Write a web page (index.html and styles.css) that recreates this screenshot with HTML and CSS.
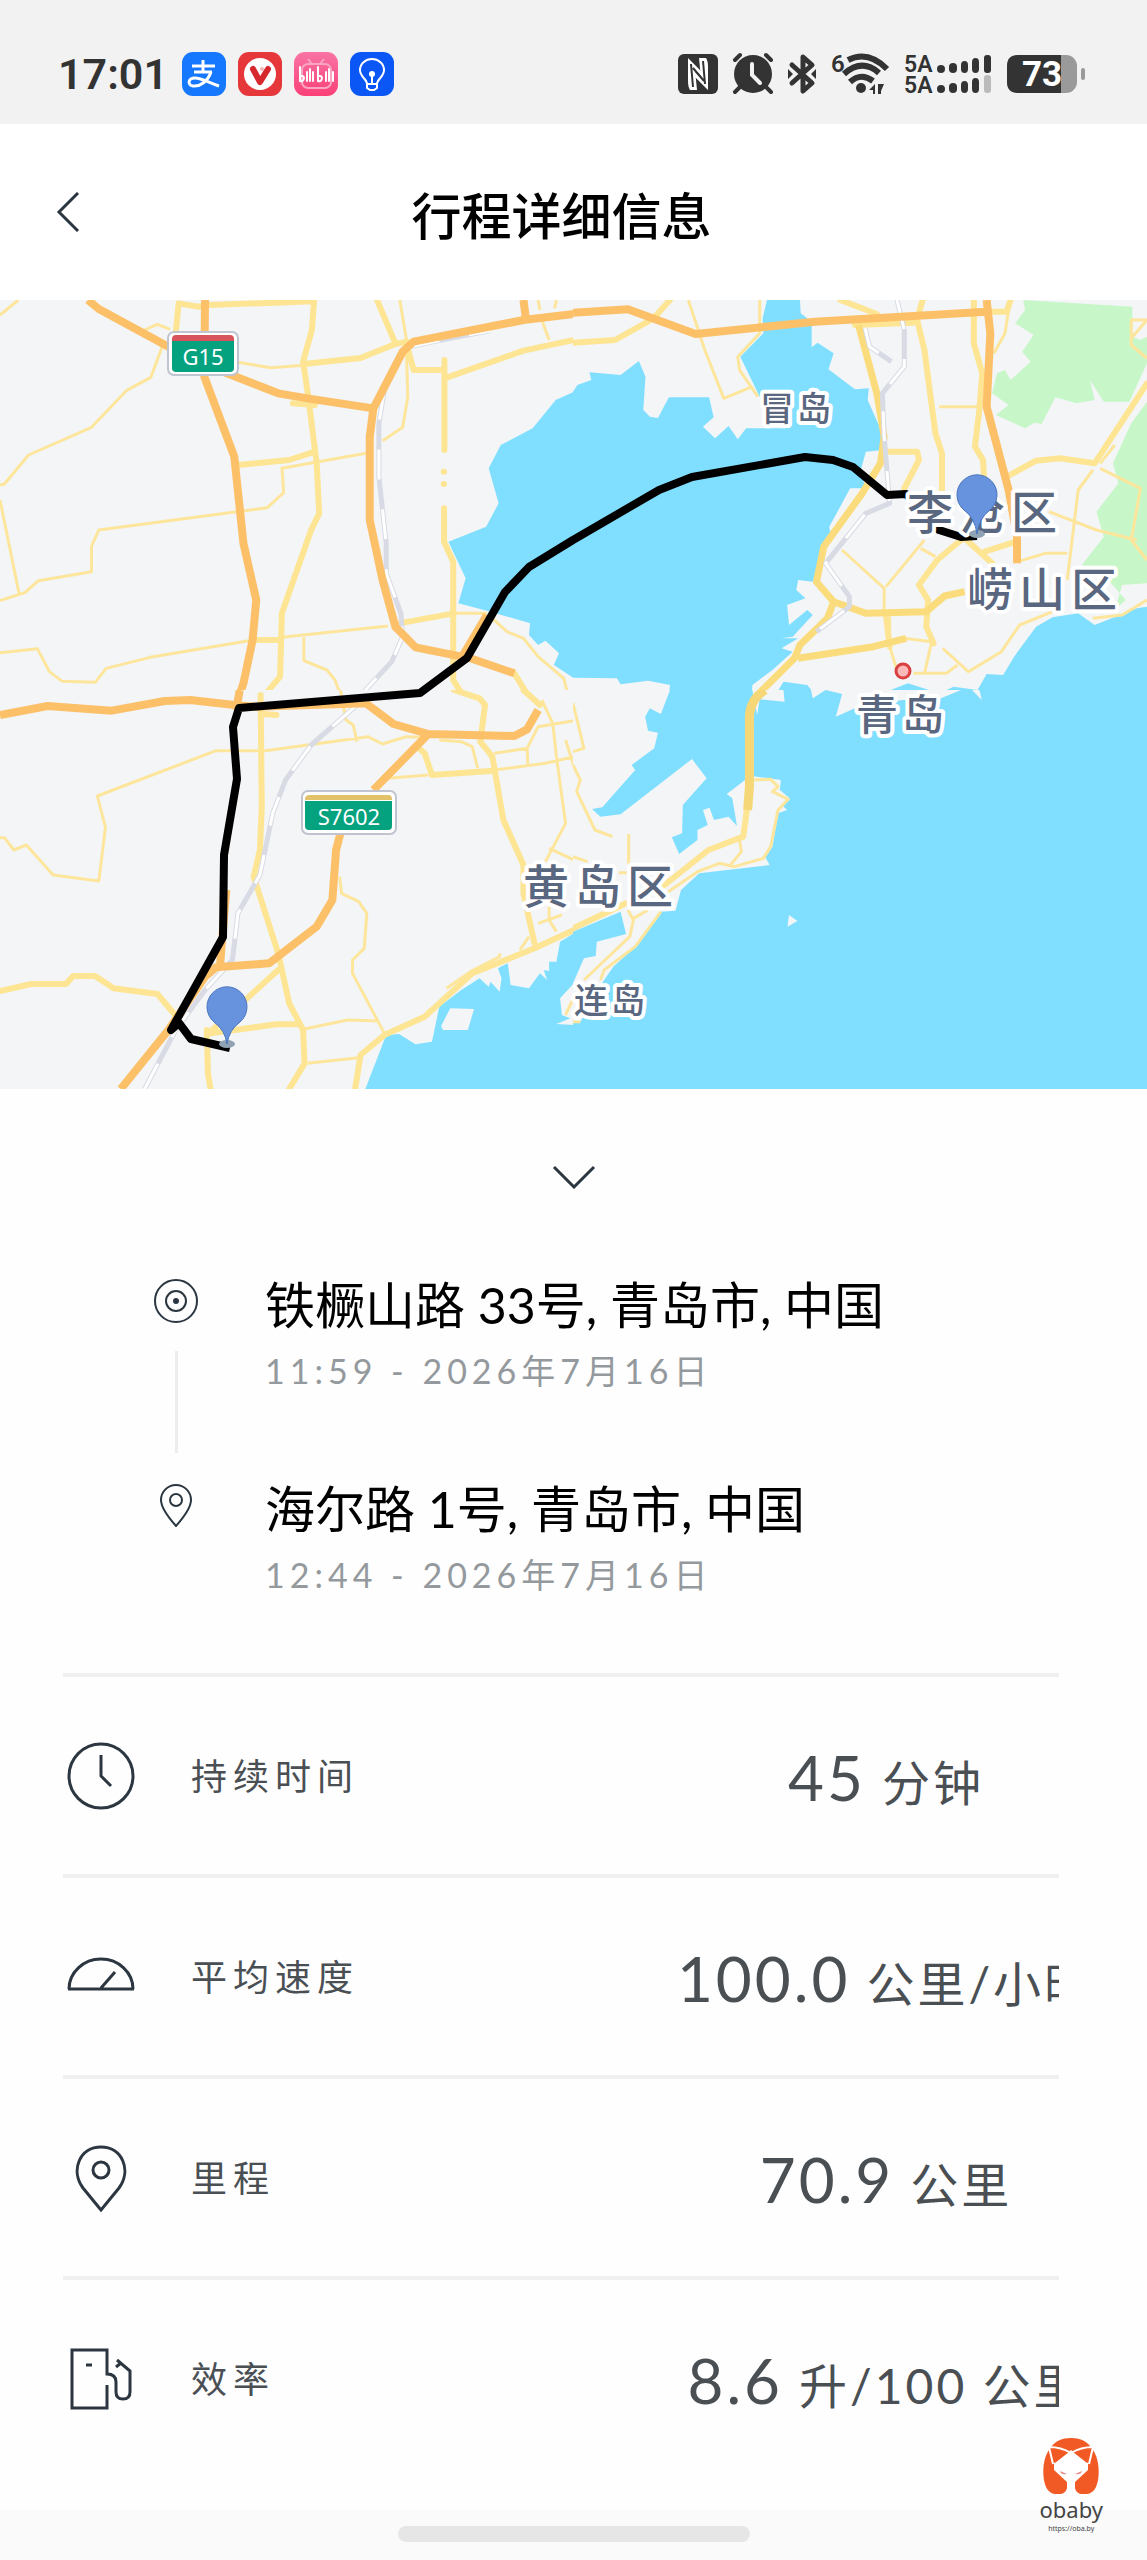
FILE: index.html
```html
<!DOCTYPE html>
<html lang="zh-CN">
    <head>
        <meta charset="utf-8">
        <meta name="viewport" content="width=device-width, initial-scale=1">
        <title>行程详细信息</title>
        <link rel="stylesheet" href="styles.css">
    </head>
    <body>
        <div class="status-bar">
            <div class="status-left">
                <span class="time">17:01</span>
                <svg class="app" viewBox="0 0 44 44">
                    <rect width="44" height="44" rx="11" fill="#1677ff"/>
                    <g fill="none" stroke="#fff" stroke-width="3">
                        <path d="M10 14h23M21 8v11M12 20h18"/>
                        <path d="M29 20c-3 9-11 15-18 14c-6-1-5-8 2-8c7 0 14 5 24 8"/>
                    </g>
                </svg>
                <svg class="app" viewBox="0 0 44 44">
                    <rect width="44" height="44" rx="11" fill="#e6373b"/>
                    <circle cx="22" cy="22" r="16" fill="#fff"/>
                    <path d="M15 17l7 13l8-13" fill="none" stroke="#d6282d" stroke-width="6" stroke-linecap="round" stroke-linejoin="round"/>
                    <circle cx="24" cy="17" r="2" fill="#f3b6b8"/>
                </svg>
                <svg class="app" viewBox="0 0 44 44">
                    <defs>
                        <linearGradient id="pink" x2="0" y2="1">
                            <stop stop-color="#f874a4"/>
                            <stop offset="1" stop-color="#fb4077"/>
                        </linearGradient>
                    </defs>
                    <rect width="44" height="44" rx="11" fill="url(#pink)"/>
                    <path d="M14 7l4 5M30 7l-4 5" stroke="#fba5c3" stroke-width="2"/>
                    <rect x="8" y="12" width="29" height="24" rx="6" fill="none" stroke="#fba5c3" stroke-width="2"/>
                    <g fill="none" stroke="#fff" stroke-width="2" stroke-linecap="round">
                        <path d="M6 15v14c4 2 6-6 1-5M24 15v14c4 2 6-6 1-5"/>
                        <path d="M13 20v9M16 17v12M19 20v9M32 20v9M35 17v12M39 20v9"/>
                    </g>
                </svg>
                <svg class="app" viewBox="0 0 44 44">
                    <rect width="44" height="44" rx="11" fill="#0b57f5"/>
                    <g fill="none" stroke="#fff" stroke-width="2">
                        <path d="M17 32c0-5-7-7-7-14a12 11 0 0 1 24 0c0 7-7 9-7 14z"/>
                        <path d="M17 32v4l3 2h4l3-2v-4M22 22v9"/>
                    </g>
                    <circle cx="22" cy="22" r="3" fill="#fff"/>
                </svg>
            </div>
            <div class="status-right">
                <svg width="40" height="40" viewBox="0 0 40 40">
                    <rect width="40" height="40" rx="6" fill="#333"/>
                    <path d="M10 4l15 15v5l-8-8l2 20h-7q-2-3-2-9z" fill="#fff"/>
                    <path d="M30 36L15 21v-5l8 8l-2-20h7q2 3 2 9z" fill="#fff"/>
                    <path d="M13 10l2 23M27 30l-2-23M15 14l11 13" stroke="#333" stroke-width="2"/>
                </svg>
                <svg width="40" height="40" viewBox="0 0 40 40">
                    <circle cx="20" cy="20" r="19" fill="#333"/>
                    <path d="M2 6l5-5M38 6l-5-5M7 33l-5 5M33 33l5 5" stroke="#333" stroke-width="4" stroke-linecap="round"/>
                    <path d="M19 10v11l8 8" fill="none" stroke="#f2f2f2" stroke-width="4" stroke-linecap="round"/>
                </svg>
                <svg width="28" height="40" viewBox="0 0 28 40">
                    <path d="M4 11l20 18l-9 8V3l9 8L4 29" fill="none" stroke="#333" stroke-width="5" stroke-linecap="round" stroke-linejoin="round"/>
                    <path d="M0 15l5 5l-5 5zM28 15l-5 5l5 5z" fill="#333"/>
                </svg>
                <svg width="58" height="42" viewBox="0 0 58 42">
                    <text class="status-text" x="0" y="19" font-size="24">6</text>
                    <g fill="none" stroke="#333" stroke-width="6">
                        <path d="M17 7Q37-3 56 16"/>
                        <path d="M13 21Q31 5 48 20"/>
                        <path d="M19 29Q30 19 42 28"/>
                    </g>
                    <circle cx="30" cy="35" r="5" fill="#333"/>
                    <path d="M44 31v10h-2v-4h-4zM47 31h6l-3 7v3h-3z" fill="#333"/>
                </svg>
                <svg width="88" height="40" viewBox="0 0 88 40">
                    <text class="status-text" x="0" y="18" font-size="23">5A</text>
                    <text class="status-text" x="0" y="39" font-size="23">5A</text>
                    <g fill="#333">
                        <rect x="33" y="11" width="8" height="8" rx="4"/>
                        <rect x="45" y="9" width="8" height="10" rx="4"/>
                        <rect x="57" y="7" width="7" height="12" rx="4"/>
                        <rect x="68" y="4" width="7" height="15" rx="4"/>
                        <rect x="80" y="1" width="7" height="18" rx="3"/>
                        <rect x="33" y="31" width="8" height="8" rx="4"/>
                        <rect x="45" y="29" width="8" height="10" rx="4"/>
                        <rect x="57" y="27" width="7" height="12" rx="4"/>
                        <rect x="68" y="24" width="7" height="15" rx="4"/>
                    </g>
                    <rect x="80" y="21" width="7" height="18" rx="3" fill="#bbb"/>
                </svg>
                <svg width="79" height="38" viewBox="0 0 79 38">
                    <rect width="70" height="38" rx="11" fill="#9a9a9a"/>
                    <path d="M11 0h43v38H11Q0 38 0 27V11Q0 0 11 0z" fill="#333"/>
                    <rect x="74" y="13" width="4" height="12" rx="2" fill="#9a9a9a"/>
                    <text class="battery-text" x="15" y="31">73</text>
                </svg>
            </div>
        </div>

        <header class="header">
            <button class="back" aria-label="返回">
                <svg width="24" height="40" viewBox="0 0 24 40"><path d="M22 1L3 20l19 19"/></svg>
            </button>
            <h1 class="title">行程详细信息</h1>
        </header>

        <svg class="map" viewBox="0 0 1147 789" role="img" aria-label="行程地图">
            <!-- north west -->
            <svg x="0" y="-10" width="574" height="410" viewBox="0 0 1568 1230" preserveAspectRatio="none">
                <path class="water" d="M1568 305L1518 330L1455 415L1368 465L1335 535L1362 640L1328 710L1225 755L1272 865L1252 940L1330 962L1448 1000L1445 1035L1470 1065L1490 1052L1527 1090L1513 1125L1568 1165z"/>
                <path class="street" d="M0 75L50 30M443 170L412 262L345 302L250 412L78 495L12 582L0 585M0 630L52 910M0 932L68 908L105 872L250 845V768L270 720L730 653L775 608L770 530M770 535L1000 490M1045 452L1100 412L1114 320L1110 180M1092 30L1112 160M0 1088L102 1076L135 1145L170 1174L260 1177L290 1135L410 1102L680 1052M770 1042L1060 1008M830 1042V1112L893 1140L915 1170L935 1230M650 217L740 233L830 226M1480 90L1500 150M1470 30L1475 60M1520 30L1515 55M1240 970H1330M1345 985L1385 1025L1430 1045L1470 1100L1540 1165L1555 1230M395 120L430 103L465 118"/>
                <path class="avenue" d="M480 130L488 40L540 50L570 45L858 34M858 30L852 120L828 215L842 320L865 520L872 670L850 720L770 970L765 1160L712 1230M830 222L985 204L1080 162L1112 155M1030 30L1080 160M1115 180L1130 240H1213M1214 210V480M1214 265L1430 182L1568 150M650 525L790 510L860 485M1213 655V755L1238 815V1170L1258 1205L1310 1230M1090 1000L1240 970M700 1050H765M800 340L860 345M1405 1150L1450 1230M1212 545h1M1212 582h1"/>
                <path class="rail" d="M1120 170L1185 155L1340 122M1050 300L1035 400V560L1055 760V850L1095 970L1100 1040L1070 1115L990 1210L975 1230"/>
                <path class="rail-dash" d="M1120 170L1185 155L1340 122M1050 300L1035 400V560L1055 760V850L1095 970L1100 1040L1070 1115L990 1210L975 1230"/>
                <path class="highway" d="M240 30L270 57L460 170L620 250L760 310L840 325L1020 355M560 30L558 260L640 500L665 760L700 930L690 1050L665 1180L650 1230M1568 72L1430 90L1130 155L1100 185L1020 355L1010 440V690L1045 870L1080 1010L1135 1072L1285 1105L1405 1150M1430 30L1437 90M1265 1095L1330 975"/>
                <path class="highway" d="M420 1230L470 1226H540L570 1230"/>
            </svg>
            <!-- south west -->
            <svg x="0" y="390" width="574" height="410" viewBox="0 0 1568 1230" preserveAspectRatio="none">
                <rect class="land" width="1568" height="1230"/>
                <path class="water" d="M998 1197L1055 1035L1090 1032L1135 1063L1180 1055L1200 950L1260 900L1310 865L1335 890L1340 875L1365 905L1370 865L1360 835L1387 820L1395 885L1445 895L1475 850L1495 870L1485 840L1500 843V815L1520 815L1530 755L1568 730V880L1530 925L1535 975L1558 985L1520 1002L1568 1005V1230H990z"/>
                <path class="land" d="M1230 955L1295 957L1278 1020H1210L1205 1008z"/>
                <path class="street" d="M0 443H12L38 480L72 465L145 555L270 573L288 412L266 318L590 182H725L1005 140L1045 162L1110 140L1155 142M930 0L945 90L965 105L975 155M1200 150L1260 155L1290 170L1305 235M1060 265L1170 255M1350 240L1490 220L1568 200M1350 190L1440 175L1470 110L1568 92M1440 175L1442 225M1480 30L1510 100L1520 200L1545 400L1490 515M1545 150L1568 230M1500 475L1568 510M928 560L933 610L980 635L1002 670L995 775L963 810V850L1050 1030M828 1018L950 990L1035 993M840 1120L980 1103M1470 700L1535 675M1500 650V690L1520 725M1420 780L1445 740"/>
                <path class="street" d="M1545 975L1568 920M1220 895L1285 845L1365 800V790"/>
                <path class="avenue" d="M712 15L715 350L710 480L693 560L760 790L790 940L828 1020L832 1120L790 1197M755 75L720 72M1140 170L1160 190L1180 255L1350 242M1240 0L1310 25L1325 45L1312 155L1345 200L1375 390L1430 525V610L1460 760M1430 0L1475 45M0 903L85 882H180L200 858H260L310 895L430 912L490 990M570 1030L760 840M575 1030L755 1003H810M565 1020L568 1150L575 1197M970 1197L985 1095L1050 1035L1160 980L1290 850L1460 775L1568 720"/>
                <path class="rail" d="M970 50L850 165L780 270L745 370L710 555L650 670L635 810L560 900L480 1020L395 1197"/>
                <path class="rail-dash" d="M970 50L850 165L780 270L745 370L710 555L650 670L635 810L560 900L480 1020L395 1197"/>
                <path class="highway" d="M0 75L130 48L305 62L450 33L520 30L640 45L700 50L1000 40L1075 102L1170 132L1405 138L1440 118L1470 60M655 0L645 60M1170 132L1020 300M930 430L918 480L908 630L865 710L735 820L590 832L560 860L460 1020L330 1197M618 600L600 840"/>
            </svg>
            <!-- north east -->
            <svg x="573" y="-10" width="574" height="410" viewBox="0 0 1568 1230" preserveAspectRatio="none">
                <rect class="land" width="1568" height="1230"/>
                <path class="park" d="M1230 30L1235 60L1208 100L1258 135L1227 185L1250 215L1195 270L1180 240L1158 250L1145 310L1190 345L1155 375L1235 415L1260 398L1280 402L1318 322L1375 340L1425 330L1412 270L1450 335L1520 335L1568 220V140L1550 150L1528 140V50zM1568 335L1525 400L1475 520L1490 580L1430 665L1450 740L1390 825L1470 880L1510 930L1480 960L1500 885L1568 880z"/>
                <path class="water" d="M0 305L12 285L50 270L45 247L130 255L180 213L198 260L192 360L210 380L232 384L262 322L372 322L384 382L355 410L388 445L425 408L450 448L473 415L580 415L510 320L457 200L520 130L518 85L530 30H620L622 70L652 95V172L668 158L712 190L698 238L770 298L808 295L805 330L845 430V480L800 485L785 545L800 595L757 595L735 640L700 710L705 745L685 770L655 875L615 870L610 900L635 925L585 945L590 1005L640 960L655 975L600 1040L570 1045L615 1045L570 1075L600 1085L545 1140L490 1185L487 1230H260L265 1185L205 1172L130 1183L120 1165L0 1163z"/>
                <path class="water" d="M1568 950L1540 955L1425 1005L1380 970L1310 982L1265 1010L1205 1100L1175 1155L1130 1152L1105 1200L1040 1190L1000 1210L915 1180L845 1210L850 1230H1568zM575 1175L640 1185L655 1205L700 1200L730 1230H545z"/>
                <path class="street" d="M315 30L360 180L412 325L490 290M510 30V130L450 200L455 240L505 320M1000 350H1110M1190 60L1180 130L1150 190M1525 145L1568 90H1525V165L1568 205M1420 540L1380 600L1350 870M1440 535L1550 595L1525 750L1568 810M1300 665L1430 720L1540 750M735 780L850 895V980M960 750L855 890M950 775L990 800M1215 815L1290 790H1350M1480 465L1440 520M905 1045L980 1055L960 1150M865 980V1070L885 1140M930 1150H1020L1050 1125M1010 1075L1080 1145L1170 1085L1220 1005L1310 965M1420 985L1500 975L1568 930"/>
                <path class="avenue" d="M265 30L220 85L115 150L0 158M730 30L830 72M955 30L940 90L960 180L990 430L1008 490V620M1095 30V160L1118 250L1110 360L1098 470L1120 510L1125 600M1130 65H1185L1195 30M860 485H940L945 510L905 595M1060 750L995 810L945 885L970 930L965 1010L985 1060M855 975L865 1070M1075 750L1145 820M1125 785L1210 755M1185 560L1265 512L1330 505L1425 520L1568 280M770 105L930 98"/>
                <path class="coast-road" d="M780 105L830 310L850 440L840 520L790 610L685 770L665 875L712 935L800 970L965 965L1015 918L1070 905M712 935L695 985L620 1065L605 1105L490 1230M615 1105L820 1070L910 1045"/>
                <path class="rail" d="M885 30L905 120V230L845 310L850 440L865 640L800 670L690 820L755 920V950L665 1025M798 115L810 170L870 215"/>
                <path class="rail-dash" d="M885 30L905 120V230L845 310L850 440L865 640L800 670L690 820L755 920V950L665 1025M798 115L810 170L870 215"/>
                <path class="highway" d="M0 68L150 58L335 132L660 95L1130 65M1130 30L1140 130L1130 350L1190 600L1213 740V820"/>
            </svg>
            <!-- south east -->
            <svg x="573" y="390" width="574" height="410" viewBox="0 0 1568 1230" preserveAspectRatio="none">
                <rect class="water" width="1568" height="1230"/>
                <path class="land" d="M0 0H265L240 72L210 55L197 80L205 122L232 128L222 175L160 225L170 240L80 352L52 357L75 380L130 373L325 207L365 265L300 345L298 430L270 442L290 492L340 450V420L368 405L355 360L373 353L385 390L425 380L448 408L435 325L420 312L470 270V255L568 270L565 300L592 325L570 345L585 360L560 370L545 470L525 500L537 525L345 550L295 600L280 662L240 665L170 770L110 830L85 870L20 995L0 1000V880L30 805L62 798L65 755L145 732L130 665L0 725z"/>
                <path class="land" d="M490 0H575L578 35L510 28L503 75L495 30zM650 0L655 25L690 0L735 12L718 80L770 55L900 30L1005 25L1060 0H1110L1117 30L1090 0zM590 675L613 693L586 710z"/>
                <path class="street" d="M0 185L30 175L0 40M0 225L20 270L10 305L60 420L108 440M152 432V525M0 500L40 515M125 548H150M495 270L540 268L560 290L545 305L588 328L560 360L540 470L520 505L440 530L400 520L340 545L260 605M455 450L460 485L430 525M150 660L165 690L155 740L30 870M240 665L170 770L85 840L75 870M165 685L205 660M0 995H20"/>
                <path class="avenue" d="M475 360L465 440L370 480L250 585M145 640L0 715"/>
                <path class="coast-road wide" d="M525 0Q480 30 482 90V290L477 360"/>
            </svg>

            <path class="route" d="M230 748L191 739L179 723L171 730L223 637L224 555L237 479L233 427L239 408L420 393L467 358L505 292L529 267L573 240L659 190L692 177L805 157L833 160L853 167L887 195L906 194L939 230L961 237L977 236"/>

            <circle cx="903" cy="371" r="7" class="city-dot"/>

            <g class="sign">
                <rect x="168" y="32" width="70" height="43" rx="6"/>
                <path fill="#d9535c" d="M176 35h54q4 0 4 4v2h-62v-2q0-4 4-4z"/>
                <path fill="#04a27f" d="M172 41h62v27q0 4-4 4h-54q-4 0-4-4z"/>
                <text x="203" y="65">G15</text>
            </g>
            <g class="sign">
                <rect x="302" y="491" width="94" height="43" rx="6"/>
                <path fill="#e2c268" d="M310 495h78q4 0 4 4v1h-87v-1q0-4 5-4z"/>
                <path fill="#04a27f" d="M305 501h87v25q0 4-4 4h-79q-4 0-4-4z"/>
                <text x="349" y="525">S7602</text>
            </g>

            <g class="place">
                <text class="district" x="907" y="229">李沧区</text>
                <text class="district" x="967" y="306">崂山区</text>
                <text class="district" x="523" y="603">黄岛区</text>
                <text class="city" x="856" y="430">青岛</text>
                <text class="island" x="760" y="121">冒岛</text>
                <text class="island" x="574" y="713">连岛</text>
            </g>

            <g class="pin">
                <ellipse cx="977" cy="234" rx="8" ry="4"/>
                <path d="M977 234Q975 218 964 210A20 20 0 1 1 990 210Q979 218 977 234z"/>
                <ellipse cx="227" cy="744" rx="8" ry="4"/>
                <path d="M227 744Q225 730 214 722A20 20 0 1 1 240 722Q229 730 227 744z"/>
            </g>
        </svg>

        <main class="details">
            <button class="collapse" aria-label="收起">
                <svg width="44" height="24" viewBox="0 0 44 24"><path d="M2 2l20 20L42 2"/></svg>
            </button>

            <ol class="stops">
                <li class="stop">
                    <div class="marker">
                        <svg width="44" height="44" viewBox="0 0 44 44">
                            <circle cx="22" cy="22" r="21"/>
                            <circle cx="22" cy="22" r="10"/>
                            <circle cx="22" cy="22" r="2" fill="#2b3640"/>
                        </svg>
                        <span class="connector"></span>
                    </div>
                    <div>
                        <p class="address">铁橛山路 33号, 青岛市, 中国</p>
                        <p class="date">11:59 - 2026年7月16日</p>
                    </div>
                </li>
                <li class="stop">
                    <div class="marker">
                        <svg width="44" height="44" viewBox="0 0 44 44">
                            <path d="M22 43Q7 26 7 17a15 15 0 0 1 30 0Q37 26 22 43z"/>
                            <circle cx="22" cy="17" r="6"/>
                        </svg>
                    </div>
                    <div>
                        <p class="address">海尔路 1号, 青岛市, 中国</p>
                        <p class="date">12:44 - 2026年7月16日</p>
                    </div>
                </li>
            </ol>

            <dl class="stats">
                <div class="stat">
                    <svg width="68" height="68" viewBox="0 0 68 68">
                        <circle cx="34" cy="34" r="32"/>
                        <path d="M34 13v21l10 10"/>
                    </svg>
                    <dt>持续时间</dt>
                    <dd><span class="number">45</span> 分钟</dd>
                </div>
                <div class="stat">
                    <svg width="68" height="68" viewBox="0 0 68 68">
                        <path d="M1 46h66M2 46a32 30 0 0 1 64 0M34 45l14-16"/>
                    </svg>
                    <dt>平均速度</dt>
                    <dd><span class="number">100.0</span> 公里/小时</dd>
                </div>
                <div class="stat">
                    <svg width="68" height="68" viewBox="0 0 68 68">
                        <path d="M34 66L16 44C3 26 13 3 34 3s31 23 18 41z"/>
                        <circle cx="34" cy="26" r="8"/>
                    </svg>
                    <dt>里程</dt>
                    <dd><span class="number">70.9</span> 公里</dd>
                </div>
                <div class="stat">
                    <svg width="68" height="68" viewBox="0 0 68 68">
                        <path d="M40 40v23H5V5h35v24q9 0 9 8v10q0 7 7 7t7-7V26L50 15M49 22l5-4M19 20h6"/>
                    </svg>
                    <dt>效率</dt>
                    <dd><span class="number">8.6</span> 升/100 公里</dd>
                </div>
            </dl>
        </main>

        <footer class="nav-bar">
            <span class="nav-handle"></span>
        </footer>

        <div class="watermark">
            <svg width="56" height="56" viewBox="0 0 56 56">
                <path fill="#f15a24" d="M28 0C17 0 11 4 6 12C-1 22-1 40 3 49C6 56 13 57 18 56C24 54 25 50 24 42H32C31 50 32 54 38 56C43 57 50 56 53 49C57 40 57 22 50 12C45 4 39 0 28 0z"/>
                <path fill="#fff" d="M28 12L45 25V32L32 44V56H24V44L11 32V25z"/>
                <path fill="#f15a24" d="M5 8l21 6l-14 11zM51 8l-21 6l14 11z"/>
                <path fill="none" stroke="#fff" stroke-width="2" d="M10 26L6 9Q18 9 28 15Q38 9 50 9L46 26"/>
                <path fill="#e78a8a" d="M17 33l7 3q-6 1-7-3zM39 33l-7 3q6 1 7-3z"/>
            </svg>
            <span class="brand">obaby</span>
            <span class="brand-url">https://oba.by</span>
        </div>
    </body>
</html>
```
FILE: styles.css
```css
* {
    box-sizing: border-box;
    margin: 0;
    padding: 0;
}

body {
    position: relative;
    display: flex;
    flex-direction: column;
    min-height: 100vh;
    background-color: #fefefe;
    font-family: Lato, "Noto Sans CJK SC", sans-serif;
}

button {
    border: 0;
    background: none;
    cursor: pointer;
}

svg {
    flex-shrink: 0;
}

.status-bar {
    display: flex;
    align-items: center;
    justify-content: space-between;
    height: 124px;
    padding: 24px 61px 0 58px;
    background-color: #f2f2f2;
}

.status-left {
    display: flex;
    align-items: center;
    gap: 12px;
}

.status-right {
    display: flex;
    align-items: center;
    gap: 15px;
}

.status-right svg {
    overflow: visible;
}

.time {
    margin-right: 2px;
    color: #333;
    font-family: Roboto, sans-serif;
    font-size: 43px;
    font-weight: 600;
    line-height: 48px;
}

.app {
    width: 44px;
    height: 44px;
}

.status-text {
    fill: #333;
    font-family: Roboto, sans-serif;
    font-weight: 600;
}

.battery-text {
    fill: #fff;
    font-family: Roboto, sans-serif;
    font-size: 35px;
    font-weight: 700;
}

/* header */
.header {
    display: grid;
    grid-template-columns: 120px 1fr 144px;
    align-items: center;
    height: 176px;
    background-color: #fff;
}

.back {
    display: flex;
    padding: 20px 0 20px 56px;
}

.back path,
.collapse path {
    fill: none;
    stroke: #2b3640;
    stroke-width: 3;
}

.title {
    padding-top: 8px;
    text-align: center;
    font-size: 50px;
    font-weight: 500;
    line-height: 72px;
}

/* map */
.map {
    display: block;
    width: 100%;
    height: auto;
    background-color: #f3f5f7;
}

.map path {
    vector-effect: non-scaling-stroke;
    stroke-linejoin: round;
}

.land {
    fill: #f3f5f7;
}

.water {
    fill: #80dfff;
}

.park {
    fill: #c7f7c8;
}

.street,
.avenue,
.coast-road,
.highway,
.rail,
.rail-dash,
.route {
    fill: none;
}

.street {
    stroke: #fde69c;
    stroke-width: 3;
}

.avenue {
    stroke: #fde594;
    stroke-width: 6;
    stroke-linecap: round;
}

.coast-road {
    stroke: #fbdc7c;
    stroke-width: 7;
}

.wide {
    stroke: #f5d778;
    stroke-width: 9;
}

.highway {
    stroke: #fcc069;
    stroke-width: 8;
}

.rail {
    stroke: #d8dae4;
    stroke-width: 5;
}

.rail-dash {
    stroke: #fff;
    stroke-width: 3;
    stroke-dasharray: 30 30;
}

.route {
    stroke: #000;
    stroke-width: 8;
}

.city-dot {
    fill: #fbb9b9;
    stroke: #d9403f;
    stroke-width: 3;
}

.sign rect {
    fill: #fff;
    stroke: #bfc4d0;
    stroke-width: 2;
}

.sign text {
    fill: #fff;
    font-family: "Noto Sans", sans-serif;
    font-size: 22px;
    text-anchor: middle;
}

.place {
    fill: #5a6780;
    stroke: #fff;
    stroke-width: 8;
    stroke-linejoin: round;
    paint-order: stroke;
    font-family: "Noto Sans CJK SC", sans-serif;
    font-weight: 500;
}

.district {
    font-size: 46px;
    letter-spacing: 6px;
}

.city {
    font-size: 42px;
    letter-spacing: 4px;
}

.island {
    font-size: 34px;
    letter-spacing: 3px;
}

.pin path {
    fill: #6792dd;
    stroke: #4a74bd;
    stroke-width: 1;
}

.pin ellipse {
    fill: #8fa3b5;
}

/* trip details */
.details {
    display: flex;
    flex-direction: column;
}

.collapse {
    display: flex;
    align-items: center;
    justify-content: center;
    height: 176px;
}

.stops {
    padding-top: 4px;
    padding-left: 141px;
    list-style: none;
}

.stop {
    display: grid;
    grid-template-columns: 70px 1fr;
    column-gap: 54px;
    height: 204px;
}

.stop:last-child {
    height: 200px;
}

.marker {
    display: flex;
    flex-direction: column;
    align-items: center;
    gap: 28px;
    padding-top: 10px;
}

.marker svg {
    fill: none;
    stroke: #2b3640;
    stroke-width: 2;
}

.connector {
    width: 3px;
    height: 102px;
    background-color: #ededed;
}

.address {
    font-size: 50px;
    line-height: 72px;
    white-space: nowrap;
}

.date {
    color: #94999d;
    font-size: 34px;
    line-height: 60px;
    letter-spacing: 5px;
    white-space: nowrap;
}

.stats {
    margin-left: 63px;
    margin-right: 88px;
}

.stat {
    display: grid;
    grid-template-columns: 68px 1fr 346px;
    column-gap: 56px;
    align-items: center;
    height: 201px;
    padding-left: 4px;
    border-top: 4px solid #f0f0f0;
    overflow: hidden;
}

.stat svg {
    fill: none;
    stroke: #2b3640;
    stroke-width: 3;
}

.stat dt {
    color: #4a4f54;
    font-size: 36px;
    letter-spacing: 6px;
    line-height: 52px;
}

.stat dd {
    display: flex;
    align-items: baseline;
    justify-content: center;
    gap: 16px;
    padding-top: 8px;
    color: #4a4f54;
    font-size: 48px;
    letter-spacing: 3px;
    line-height: 80px;
    white-space: nowrap;
}

.number {
    font-size: 62px;
}

.nav-bar {
    display: flex;
    justify-content: center;
    height: 50px;
    margin-top: auto;
    padding-top: 16px;
    background-color: #fafafa;
}

.nav-handle {
    width: 352px;
    height: 16px;
    border-radius: 8px;
    background-color: #e6e6e6;
}

.watermark {
    position: absolute;
    right: 44px;
    bottom: 26px;
    display: flex;
    flex-direction: column;
    align-items: center;
    color: #444;
    font-family: "Noto Sans", sans-serif;
}

.brand {
    font-size: 22px;
    line-height: 30px;
}

.brand-url {
    font-size: 7px;
    line-height: 10px;
}
```
